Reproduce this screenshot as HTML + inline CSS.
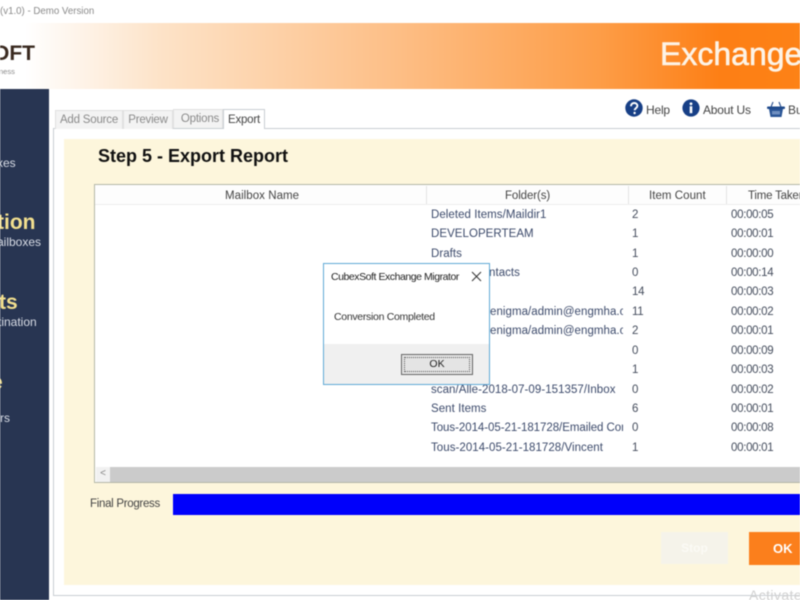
<!DOCTYPE html>
<html><head><meta charset="utf-8"><title>CubexSoft Exchange Migrator</title>
<style>
html,body{margin:0;padding:0;width:800px;height:600px;overflow:hidden;background:#fff}
body{position:relative;font-family:"Liberation Sans",sans-serif;color:#444}
#w{position:absolute;left:0;top:0;width:800px;height:600px;overflow:hidden;filter:blur(.45px)}
#w div{position:absolute;white-space:nowrap}
.r{font-size:11.5px;color:#3c4a6b;line-height:14px;height:14px;letter-spacing:.05px;overflow:hidden;margin-top:1px}
.c{font-size:11.5px;color:#444c5c;line-height:14px;letter-spacing:-.3px;margin-top:1px}
.h{font-size:11.5px;color:#444;line-height:14px;letter-spacing:.05px;top:189px}
.tab{font-size:11.5px;color:#8a8a8a;background:#f3f3f3;border:1px solid #e0e0e0;border-bottom:0;box-sizing:border-box;line-height:19px;text-align:center;letter-spacing:-.2px}
.s{color:#d9dde6;font-size:12px;line-height:14px}
.y{color:#f3e08f;font-size:21px;font-weight:bold;line-height:24px}
</style></head><body><div id="w">
<div style="left:0;top:5px;font-size:9.7px;color:#8a8a8a;line-height:14px">(v1.0) - Demo Version</div>

<div style="left:0;top:23px;width:800px;height:66px;background:linear-gradient(90deg,#fff 0,#fff 25px,#fde3c8 160px,#fdbe85 400px,#fd9d47 600px,#fd7f15 720px,#fd8216 800px)"></div>
<div style="left:-7px;top:40px;font-size:21px;font-weight:bold;color:#3a2a20;line-height:28px">OFT</div>
<div style="left:-1px;top:67px;font-size:7.5px;color:#8a8a8a;line-height:10px">ness</div>
<div style="left:660px;top:35px;font-size:32px;color:#fdf3e6;-webkit-text-stroke:.6px #fdf3e6;line-height:38px">Exchange</div>

<div style="left:0;top:89px;width:49px;height:511px;background:#283552"></div>
<div class="s" style="left:-3px;top:156px">xes</div>
<div class="y" style="left:-3px;top:211px">tion</div>
<div class="s" style="left:-3px;top:235px">ailboxes</div>
<div class="y" style="left:-1px;top:291px">ts</div>
<div class="s" style="left:-2px;top:315px">tination</div>
<div class="y" style="left:-9px;top:371px">e</div>
<div class="s" style="left:0;top:411px">rs</div>

<div style="left:53px;top:128px;width:760px;height:468px;box-sizing:border-box;border:1px solid #c9ced3;background:#fff"></div>
<div class="tab" style="left:55px;top:110px;width:68px;height:19px">Add Source</div>
<div class="tab" style="left:123px;top:110px;width:50px;height:19px">Preview</div>
<div class="tab" style="left:173px;top:109px;width:50px;height:19px;padding-left:4px">Options</div>
<div class="tab" style="left:223px;top:109px;width:42px;height:20px;background:#fff;color:#444;border-color:#c9ced3;line-height:20px">Export</div>

<svg style="position:absolute;left:625px;top:99px" width="19" height="19" viewBox="0 0 19 19"><circle cx="9" cy="9" r="8.7" fill="#173f86"/><path d="M6 7.2C6 5 7.6 4 9.2 4c1.9 0 3.2 1.2 3.2 2.8 0 2.4-2.7 2.3-2.7 4.5" fill="none" stroke="#fff" stroke-width="1.9"/><circle cx="9.6" cy="14" r="1.2" fill="#fff"/></svg>
<div style="left:646px;top:103px;font-size:12px;color:#444;line-height:15px;letter-spacing:-.2px">Help</div>
<svg style="position:absolute;left:682px;top:99px" width="18" height="18" viewBox="0 0 18 18"><circle cx="9" cy="9" r="8.6" fill="#173f86"/><circle cx="9" cy="4.8" r="1.4" fill="#fff"/><rect x="7.7" y="7.2" width="2.6" height="7" fill="#fff"/></svg>
<div style="left:703px;top:103px;font-size:12px;color:#444;line-height:15px;letter-spacing:-.2px">About Us</div>
<svg style="position:absolute;left:767px;top:101px" width="18" height="17" viewBox="0 0 18 17"><path d="M4 6 6 1M14 6 12 1" stroke="#2a4f8f" stroke-width="1.1" fill="none"/><rect x="0" y="5.5" width="18" height="2.5" rx="1" fill="#1f4a8c"/><path d="M2 8h14l-1.5 8h-11z" fill="#2a5596"/><rect x="5" y="10" width="8" height="3.5" fill="#6f8fc0"/></svg>
<div style="left:788px;top:103px;font-size:12px;color:#444;line-height:15px">Buy</div>

<div style="left:64px;top:139px;width:736px;height:446px;background:#fdf6dc"></div>
<div style="left:98px;top:146px;font-size:18px;font-weight:bold;color:#111;line-height:20px">Step 5 - Export Report</div>

<div style="left:94px;top:184px;width:720px;height:299px;box-sizing:border-box;border:1px solid #b4b8a8;background:#fff"></div>
<div style="left:95px;top:185px;width:705px;height:19px;background:#fdfdfd;border-bottom:1px solid #eee"></div>
<div style="left:426px;top:186px;width:1px;height:18px;background:#e4e4e4"></div>
<div style="left:628px;top:186px;width:1px;height:18px;background:#e4e4e4"></div>
<div style="left:726px;top:186px;width:1px;height:18px;background:#e4e4e4"></div>
<div class="h" style="left:225px">Mailbox Name</div>
<div class="h" style="left:505px;letter-spacing:-.1px">Folder(s)</div>
<div class="h" style="left:649px">Item Count</div>
<div class="h" style="left:748px;letter-spacing:-.2px">Time Taken</div>

<div class="r" style="left:431px;top:207px">Deleted Items/Maildir1</div><div class="c" style="left:632px;top:207px">2</div><div class="c" style="left:731px;top:207px">00:00:05</div>
<div class="r" style="left:431px;top:226px">DEVELOPERTEAM</div><div class="c" style="left:632px;top:226px">1</div><div class="c" style="left:731px;top:226px">00:00:01</div>
<div class="r" style="left:431px;top:246px">Drafts</div><div class="c" style="left:632px;top:246px">1</div><div class="c" style="left:731px;top:246px">00:00:00</div>
<div class="r" style="left:489px;top:265px">ntacts</div><div class="c" style="left:632px;top:265px">0</div><div class="c" style="left:731px;top:265px">00:00:14</div>
<div class="c" style="left:632px;top:284px">14</div><div class="c" style="left:731px;top:284px">00:00:03</div>
<div class="r" style="left:490px;top:304px;width:133px">enigma/admin@engmha.com</div><div class="c" style="left:632px;top:304px">11</div><div class="c" style="left:731px;top:304px">00:00:02</div>
<div class="r" style="left:490px;top:323px;width:133px">enigma/admin@engmha.com</div><div class="c" style="left:632px;top:323px">2</div><div class="c" style="left:731px;top:323px">00:00:01</div>
<div class="c" style="left:632px;top:343px">0</div><div class="c" style="left:731px;top:343px">00:00:09</div>
<div class="c" style="left:632px;top:362px">1</div><div class="c" style="left:731px;top:362px">00:00:03</div>
<div class="r" style="left:431px;top:382px">scan/Alle-2018-07-09-151357/Inbox</div><div class="c" style="left:632px;top:382px">0</div><div class="c" style="left:731px;top:382px">00:00:02</div>
<div class="r" style="left:431px;top:401px">Sent Items</div><div class="c" style="left:632px;top:401px">6</div><div class="c" style="left:731px;top:401px">00:00:01</div>
<div class="r" style="left:431px;top:420px;width:192px;letter-spacing:-.05px">Tous-2014-05-21-181728/Emailed Contacts</div><div class="c" style="left:632px;top:420px">0</div><div class="c" style="left:731px;top:420px">00:00:08</div>
<div class="r" style="left:431px;top:440px">Tous-2014-05-21-181728/Vincent</div><div class="c" style="left:632px;top:440px">1</div><div class="c" style="left:731px;top:440px">00:00:01</div>

<div style="left:96px;top:467px;width:704px;height:15px;background:#cbcbcb"></div>
<div style="left:96px;top:467px;width:14px;height:15px;background:#f1f1f1;color:#888;font-size:10px;line-height:14px;text-align:center">&lt;</div>

<div style="left:90px;top:497px;font-size:11.5px;color:#444;line-height:14px;letter-spacing:-.3px">Final Progress</div>
<div style="left:173px;top:494px;width:627px;height:21px;background:#0000fb"></div>

<div style="left:661px;top:532px;width:67px;height:32px;background:#f5f3ea;color:#fbfaf5;font-size:12px;font-weight:bold;line-height:32px;text-align:center">Stop</div>
<div style="left:749px;top:532px;width:51px;height:33px;background:#fb7f1c;color:#fff;font-size:13px;font-weight:bold;line-height:33px;padding-left:24px">OK</div>
<div style="left:749px;top:587px;font-size:14px;color:#d0d0d0;line-height:16px;letter-spacing:.4px">Activate</div>

<div style="left:323px;top:263px;width:167px;height:122px;box-sizing:border-box;border:1px solid #5fa9d6;background:#fff"></div>
<div style="left:324px;top:344px;width:165px;height:40px;background:#f0f0f0"></div>
<div style="left:331px;top:270px;font-size:10.5px;color:#222;line-height:14px;letter-spacing:-.45px">CubexSoft Exchange Migrator</div>
<svg style="position:absolute;left:471px;top:271px" width="11" height="11" viewBox="0 0 11 11"><path d="M1 1 10 10M10 1 1 10" stroke="#333" stroke-width="1" fill="none"/></svg>
<div style="left:334px;top:310px;font-size:10.5px;color:#333;line-height:14px;letter-spacing:-.3px">Conversion Completed</div>
<div style="left:401px;top:354px;width:72px;height:21px;box-sizing:border-box;border:1px solid #666;background:#e4e4e4"></div>
<div style="left:404px;top:357px;width:66px;height:15px;box-sizing:border-box;border:1px dotted #555;font-size:10.5px;color:#222;line-height:13px;text-align:center">OK</div>
</div></body></html>
